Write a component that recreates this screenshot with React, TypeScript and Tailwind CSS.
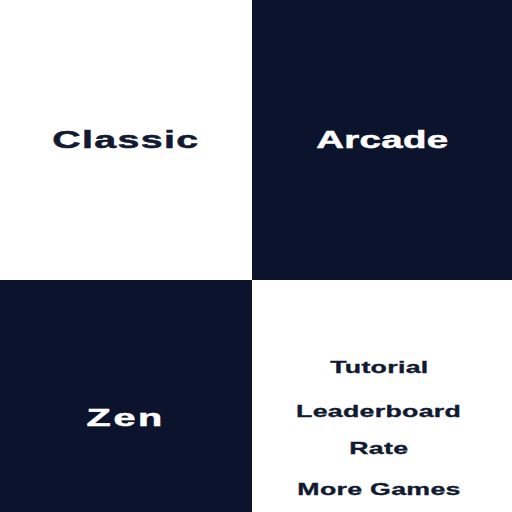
export default function App() {
  const menu = [
    { label: "Tutorial", cls: "mt-[79px]" },
    { label: "Leaderboard", cls: "mt-[27px]" },
    { label: "Rate", cls: "mt-[20px]" },
    { label: "More Games", cls: "mt-[24px]" },
  ];

  return (
    <div
      className="grid h-[512px] w-[512px] grid-cols-[252px_260px] grid-rows-[280px_232px] overflow-hidden"
      style={{ fontFamily: '"Liberation Sans", Arial, sans-serif' }}
    >
      {/* Classic */}
      <div className="flex items-center justify-center bg-white">
        <span className="block scale-x-[1.64] text-[24px] leading-none font-bold tracking-[0.8px] text-[#111a30] [-webkit-text-stroke:0.5px_#111a30]">
          Classic
        </span>
      </div>

      {/* Arcade */}
      <div className="flex items-center justify-center bg-[#0b142c]">
        <span className="block scale-x-[1.6] text-[24px] leading-none font-bold tracking-[0.2px] text-white [-webkit-text-stroke:0.5px_white]">
          Arcade
        </span>
      </div>

      {/* Zen */}
      <div className="flex flex-col items-center bg-[#0b142c] pt-[126px]">
        <span className="block scale-x-[1.65] text-[24px] leading-none font-bold tracking-[1.6px] text-white [-webkit-text-stroke:0.5px_white]">
          Zen
        </span>
      </div>

      {/* Menu */}
      <div className="flex flex-col items-center bg-white pr-[6px]">
        {menu.map((m) => (
          <span
            key={m.label}
            className={`block scale-x-[1.57] text-[17px] leading-none font-bold tracking-[0.2px] whitespace-nowrap text-[#111a30] [-webkit-text-stroke:0.35px_#111a30] ${m.cls}`}
          >
            {m.label}
          </span>
        ))}
      </div>
    </div>
  );
}
